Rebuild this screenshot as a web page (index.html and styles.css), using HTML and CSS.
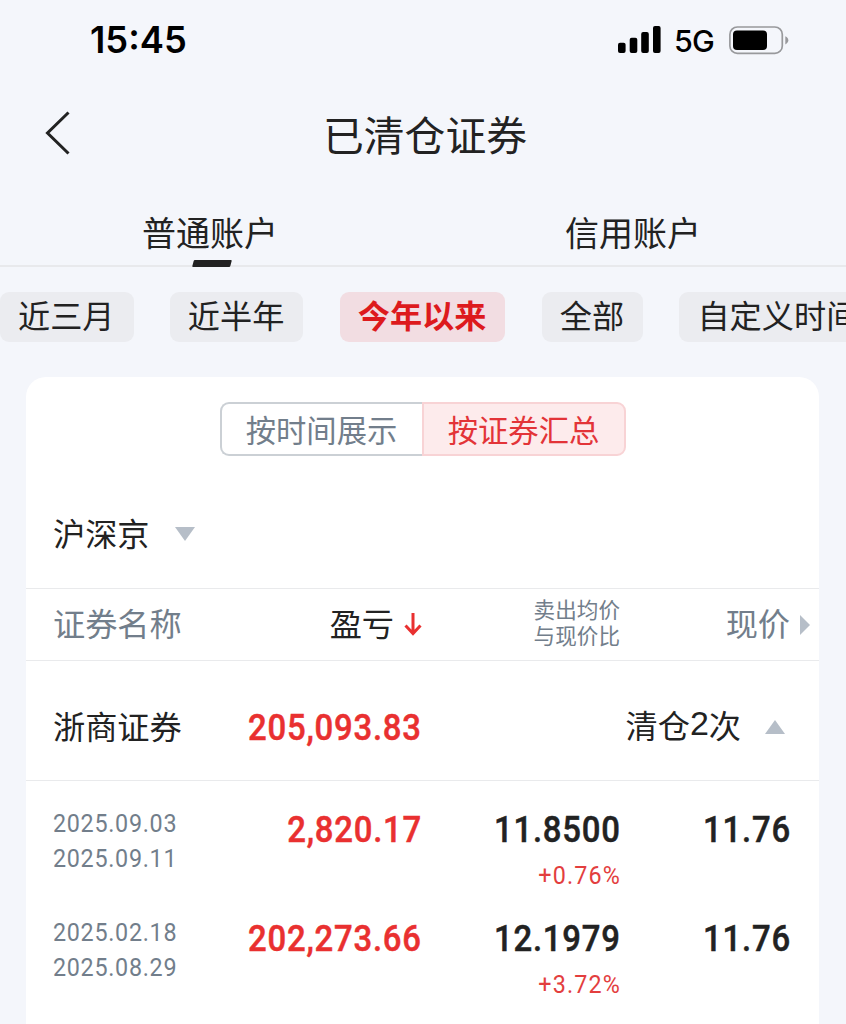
FILE: index.html
```html
<!DOCTYPE html>
<html lang="zh-CN">
<head>
    <meta charset="UTF-8">
    <meta name="viewport" content="width=device-width, initial-scale=1.0">
    <title>已清仓证券</title>
    <link rel="stylesheet" href="styles.css">
</head>
<body>
    <div class="status-bar">
        <span class="time">15:45</span>
        <div class="status-icons">
            <svg class="signal" width="43" height="28" viewBox="0 0 43 28">
                <rect x="0" y="16.7" width="7.6" height="10.3" rx="2"/>
                <rect x="11.7" y="11.7" width="7.6" height="15.3" rx="2"/>
                <rect x="23.2" y="6" width="7.6" height="21" rx="2"/>
                <rect x="35" y="0" width="7.6" height="27" rx="2"/>
            </svg>
            <span class="network">5G</span>
            <svg class="battery" width="60" height="29" viewBox="0 0 60 29">
                <rect x="0.9" y="1" width="52.4" height="26.4" rx="7.5" fill="none" stroke="#98999c" stroke-width="1.7"/>
                <rect x="4" y="4.6" width="34" height="19.4" rx="4"/>
                <path d="M56.3 10.2c4 1.6 4 6.6 0 8.2z" fill="#98999c"/>
            </svg>
        </div>
    </div>

    <header class="navbar">
        <svg class="back" width="26" height="44" viewBox="0 0 26 44">
            <path d="M23.5 1.5L2.500 22L23.5 42.5" fill="none" stroke="#222" stroke-width="3"/>
        </svg>
        <h1>已清仓证券</h1>
    </header>

    <nav class="tabs">
        <div class="tab active">普通账户</div>
        <div class="tab">信用账户</div>
    </nav>

    <div class="ranges">
        <span class="range">近三月</span>
        <span class="range">近半年</span>
        <span class="range active">今年以来</span>
        <span class="range">全部</span>
        <span class="range">自定义时间</span>
    </div>

    <main class="card">
        <div class="switch">
            <span class="switch-item">按时间展示</span>
            <span class="switch-item active">按证券汇总</span>
        </div>

        <div class="market">
            <span>沪深京</span>
            <svg width="20" height="14" viewBox="0 0 20 14"><path d="M0 0H20L10 14z" fill="#b6bec8"/></svg>
        </div>

        <div class="row head">
            <span>证券名称</span>
            <span class="right sorted">盈亏
                <svg width="18" height="24" viewBox="0 0 18 24"><path d="M9 1V21.5M1.5 13.5L9 21.5L16.5 13.5" fill="none" stroke="#e93030" stroke-width="3"/></svg>
            </span>
            <span class="right small">卖出均价<br>与现价比</span>
            <span class="right more">现价
                <svg width="10" height="20" viewBox="0 0 10 20"><path d="M0 0L10 10L0 20z" fill="#b6bec8"/></svg>
            </span>
        </div>

        <div class="row stock">
            <span>浙商证券</span>
            <span class="num red">205,093.83</span>
            <span class="count">清仓<i>2</i>次
                <svg width="20" height="14" viewBox="0 0 20 14"><path d="M0 14H20L10 0z" fill="#b6bec8"/></svg>
            </span>
        </div>

        <div class="row detail">
            <div class="dates"><span>2025.09.03</span><span>2025.09.11</span></div>
            <div class="num red">2,820.17</div>
            <div class="cost">
                <div class="num">11.8500</div>
                <div class="rate">+0.76%</div>
            </div>
            <div class="num">11.76</div>
        </div>
        <div class="row detail">
            <div class="dates"><span>2025.02.18</span><span>2025.08.29</span></div>
            <div class="num red">202,273.66</div>
            <div class="cost">
                <div class="num">12.1979</div>
                <div class="rate">+3.72%</div>
            </div>
            <div class="num">11.76</div>
        </div>
    </main>
</body>
</html>
```
FILE: styles.css
```css
* {
    box-sizing: border-box;
}
body {
    margin: 0;
    height: 1024px;
    overflow: hidden;
    background-color: #f4f6fb;
    color: #222;
    font-family: "Noto Sans CJK SC", sans-serif;
    font-size: 32.2px;
    display: flex;
    flex-direction: column;
}
svg {
    display: block;
    flex: none;
}

/* status bar */
.status-bar {
    height: 80px;
    padding: 0 57px 0 90px;
    display: flex;
    justify-content: space-between;
    align-items: center;
    color: #000;
    font-family: Inter, sans-serif;
}
.time {
    font-size: 36.3px;
    font-weight: 600;
}
.status-icons {
    display: flex;
    align-items: center;
}
.network {
    margin: 1px 15px 0 13px;
    font-size: 30.5px;
    font-weight: 500;
    letter-spacing: -0.8px;
}

/* title */
.navbar {
    height: 106px;
    padding: 0 43px 0 45px;
    display: grid;
    grid-template-columns: 26px 1fr 24px;
    align-items: center;
}
h1 {
    margin: 0;
    font-size: 40.8px;
    font-weight: 400;
    line-height: 59px;
    text-align: center;
}

/* account tabs */
.tabs {
    height: 81px;
    display: flex;
    border-bottom: 2px solid #e8e9ec;
}
.tab {
    flex: 1;
    position: relative;
    padding-right: 3px;
    font-size: 34px;
    line-height: 91px;
    text-align: center;
}
.tab.active::after {
    content: "";
    position: absolute;
    left: 50%;
    bottom: -2px;
    width: 38px;
    height: 7px;
    margin-left: -19px;
    border-radius: 1px;
    background-color: #222;
    transform: skewX(-15deg);
}

/* time ranges */
.ranges {
    height: 110px;
    padding-top: 25px;
    display: flex;
    gap: 36.3px;
}
.range {
    flex: none;
    height: 50px;
    padding: 0 19px 0 18px;
    border-radius: 9px;
    background-color: #ebecf0;
    line-height: 44px;
}
.range.active {
    background-color: #f2dde2;
    color: #dd1a1d;
    font-weight: 700;
}

.card {
    flex: 1;
    width: 793px;
    margin-left: 26px;
    padding-top: 25px;
    border-radius: 20px 20px 0 0;
    background-color: #fff;
}
.switch {
    width: 406px;
    height: 54px;
    margin: 0 auto;
    display: flex;
    font-size: 30.3px;
    line-height: 50px;
    text-align: center;
}
.switch-item {
    flex: 1;
    border: 2px solid #cbd0d5;
    border-right: none;
    border-radius: 9px 0 0 9px;
    color: #727e8b;
}
.switch-item.active {
    border: 2px solid #f8d3d5;
    border-radius: 0 9px 9px 0;
    background-color: #fdebec;
    color: #e33438;
}
.market {
    height: 132px;
    padding: 24px 27px 0;
    display: flex;
    align-items: center;
    gap: 25px;
    line-height: 48px;
}
.market span {
    margin-top: -4px;
}

/* table */
.row {
    padding: 0 29px 0 27px;
    display: grid;
    grid-template-columns: 170px 198px 199px 170px;
    align-items: center;
}
.head {
    height: 73px;
    padding-bottom: 5px;
    border-top: 1px solid #e9eaec;
    border-bottom: 1px solid #e9eaec;
    color: #727e8b;
}
.right {
    text-align: right;
}
.sorted {
    display: flex;
    justify-content: flex-end;
    align-items: center;
    gap: 10px;
    margin-right: -1px;
    color: #222;
}
.sorted svg {
    margin-top: 4px;
}
.small {
    font-size: 21.6px;
    line-height: 26px;
}
.more {
    position: relative;
}
.more svg {
    position: absolute;
    left: calc(100% + 10px);
    top: 50%;
    margin-top: -7px;
}
.stock {
    height: 120px;
    border-bottom: 1px solid #e9eaec;
    padding-bottom: 14px;
    padding-top: 22px;
}
.stock .num {
    margin-top: 4px;
}
.count {
    grid-column: 3 / 5;
    display: flex;
    align-items: center;
    justify-content: flex-end;
    padding-right: 5px;
    margin-top: -2px;
}
.count i {
    font-family: "Liberation Sans", sans-serif;
    font-style: normal;
    font-size: 34px;
}
.count svg {
    margin: 6px 0 0 24px;
}
.num,
.dates span,
.rate {
    font-family: Roboto, sans-serif;
}
/* condensed figures */
.num {
    justify-self: end;
    font-size: 37.8px;
    font-weight: 500;
    line-height: 44px;
    letter-spacing: 0.9px;
    margin-right: -1px;
    text-align: right;
    transform: scaleX(0.87);
    transform-origin: right;
    -webkit-text-stroke: 0.5px currentColor;
}
.red {
    color: #e93030;
}
.detail {
    height: 108.5px;
    padding-top: 26px;
    align-items: start;
}
.dates {
    margin-top: -2px;
}
.dates span {
    display: block;
    width: 150px;
    color: #727e8b;
    font-size: 26.5px;
    line-height: 35px;
    letter-spacing: 0.8px;
    transform: scaleX(0.88);
    transform-origin: left;
}
.rate {
    margin-top: 8px;
    color: #e33e3e;
    font-size: 26.5px;
    line-height: 31px;
    letter-spacing: 1.3px;
    margin-right: -1px;
    text-align: right;
    transform: scaleX(0.88);
    transform-origin: right;
}
```
